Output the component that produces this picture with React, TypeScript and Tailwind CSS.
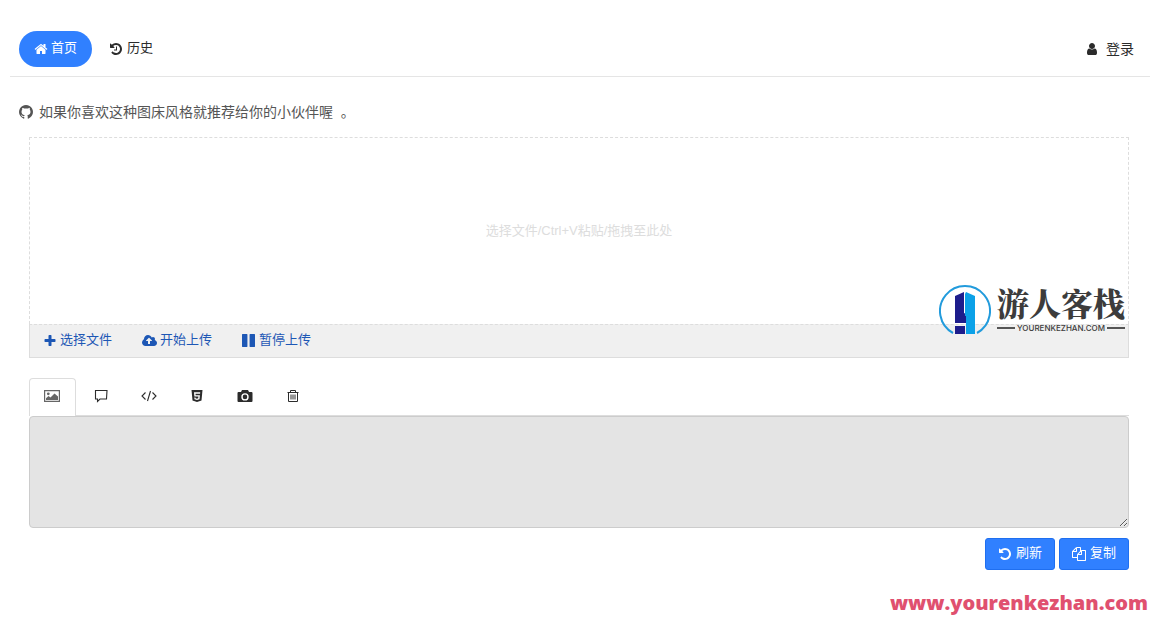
import { useState, type ReactNode } from "react";

const icons = {
    home: "M1472 992v480q0 26-19 45t-45 19h-384v-384h-256v384h-384q-26 0-45-19t-19-45v-480q0-1 .5-3t.5-3l575-474 575 474q1 2 1 6zm223-69l-62 74q-8 9-21 11h-3q-13 0-21-7l-692-577-692 577q-12 8-24 7-13-2-21-11l-62-74q-8-10-7-23.5t11-21.5l719-599q32-26 76-26t76 26l244 204v-195q0-14 9-23t23-9h192q14 0 23 9t9 23v408l219 182q10 8 11 21.5t-7 23.5z",
    history: "M1664 896q0 156-61 298t-164 245-245 164-298 61q-172 0-327-72.5t-264-204.5q-7-10-6.5-22.5t8.5-20.5l137-138q10-9 25-9 16 2 23 12 73 95 179 147t225 52q104 0 198.5-40.5t163.5-109.5 109.5-163.5 40.5-198.5-40.5-198.5-109.5-163.5-163.5-109.5-198.5-40.5q-98 0-188 35.5t-160 101.5l137 138q31 30 14 69-17 40-59 40h-448q-26 0-45-19t-19-45v-448q0-42 40-59 39-17 69 14l130 129q107-101 244.5-156.5t284.5-55.5q156 0 298 61t245 164 164 245 61 298zm-640-288v448q0 14-9 23t-23 9h-320q-14 0-23-9t-9-23v-64q0-14 9-23t23-9h224v-352q0-14 9-23t23-9h64q14 0 23 9t9 23z",
    user: "M1536 1399q0 109-62.5 187t-150.5 78h-854q-88 0-150.5-78t-62.5-187q0-85 8.5-160.5t31.5-152 58.5-131 94-89 134.5-34.5q131 128 313 128t313-128q76 0 134.5 34.5t94 89 58.5 131 31.5 152 8.5 160.5zm-256-887q0 159-112.5 271.5t-271.5 112.5-271.5-112.5-112.5-271.5 112.5-271.5 271.5-112.5 271.5 112.5 112.5 271.5z",
    github: "M896 128q209 0 385.5 103t279.5 279.5 103 385.5q0 251-146.5 451.5t-378.5 277.5q-27 5-40-7t-13-30q0-3 .5-76.5t.5-134.5q0-97-52-142 57-6 102.5-18t94-39 81-66.5 53-105 20.5-150.5q0-119-79-206 37-91-8-204-28-9-81 11t-92 44l-38 24q-93-26-192-26t-192 26q-16-11-42.5-27t-83.5-38.5-85-13.5q-45 113-8 204-79 87-79 206 0 85 20.5 150t52.5 105 80.5 67 94 39 102.5 18q-39 36-49 103-21 10-45 15t-57 5-65.5-21.5-55.5-62.5q-19-32-48.5-52t-49.5-24l-20-3q-21 0-29 4.5t-5 11.5 9 14 13 12l7 5q22 10 43.5 38t31.5 51l10 23q13 38 44 61.5t67 30 69.5 7 55.5-3.5l23-4q0 38 .5 88.5t.5 54.5q0 18-13 30t-40 7q-232-77-378.5-277.5t-146.5-451.5q0-209 103-385.5t279.5-279.5 385.5-103z",
    plus: "M1600 736v192q0 40-28 68t-68 28h-416v416q0 40-28 68t-68 28h-192q-40 0-68-28t-28-68v-416h-416q-40 0-68-28t-28-68v-192q0-40 28-68t68-28h416v-416q0-40 28-68t68-28h192q40 0 68 28t28 68v416h416q40 0 68 28t28 68z",
    cloud: "M1280 864q0-14-9-23l-352-352q-9-9-23-9t-23 9l-351 351q-10 12-10 24 0 14 9 23t23 9h224v352q0 13 9.5 22.5t22.5 9.5h192q13 0 22.5-9.5t9.5-22.5v-352h224q13 0 22.5-9.5t9.5-22.5zm640 288q0 159-112.5 271.5t-271.5 112.5h-1088q-185 0-316.5-131.5t-131.5-316.5q0-130 70-240t188-165q-2-30-2-43 0-212 150-362t362-150q156 0 285.5 87t188.5 231q71-62 166-62 106 0 181 75t75 181q0 76-41 138 130 31 213.5 135.5t83.5 238.5z",
    pause: "M1664 192v1408q0 26-19 45t-45 19h-512q-26 0-45-19t-19-45v-1408q0-26 19-45t45-19h512q26 0 45 19t19 45zm-896 0v1408q0 26-19 45t-45 19h-512q-26 0-45-19t-19-45v-1408q0-26 19-45t45-19h512q26 0 45 19t19 45z",
    undo: "M1664 896q0 156-61 298t-164 245-245 164-298 61q-172 0-327-72.5t-264-204.5q-7-10-6.5-22.5t8.5-20.5l137-138q10-9 25-9 16 2 23 12 73 95 179 147t225 52q104 0 198.5-40.5t163.5-109.5 109.5-163.5 40.5-198.5-40.5-198.5-109.5-163.5-163.5-109.5-198.5-40.5q-98 0-188 35.5t-160 101.5l137 138q31 30 14 69-17 40-59 40h-448q-26 0-45-19t-19-45v-448q0-42 40-59 39-17 69 14l130 129q107-101 244.5-156.5t284.5-55.5q156 0 298 61t245 164 164 245 61 298z",
    copy: "M1696 384q40 0 68 28t28 68v1216q0 40-28 68t-68 28h-960q-40 0-68-28t-28-68v-288h-544q-40 0-68-28t-28-68v-672q0-40 20-88t48-76l408-408q28-28 76-48t88-20h416q40 0 68 28t28 68v328q68-40 128-40h416zm-544 213l-299 299h299v-299zm-640-384l-299 299h299v-299zm196 647l316-316v-416h-384v416q0 40-28 68t-68 28h-416v640h512v-256q0-40 20-88t48-76zm956 804v-1152h-384v416q0 40-28 68t-68 28h-416v640h896z",
};

function Icon({ name, className = "size-[14px]", box = "0 0 1792 1792" }: { name: keyof typeof icons; className?: string; box?: string }) {
    return (
        <svg viewBox={box} fill="currentColor" className={className} aria-hidden="true">
            <path d={icons[name]} />
        </svg>
    );
}

const tabs: { id: string; label: string; icon: ReactNode }[] = [
    {
        id: "image",
        label: "图片链接",
        icon: (
            <svg viewBox="0 0 16 16" className="size-4" fill="currentColor">
                <path fillRule="evenodd" d="M0 2h16v12H0zM1.200 3.200v9.600h13.600V3.200z" />
                <circle cx="4.3" cy="5.800" r="1.4" />
                <path d="M2 12V10.200l2.500-2.200 2 1.500L10.500 5.500 14 8.500V12z" />
            </svg>
        ),
    },
    {
        id: "bbcode",
        label: "BBCode",
        icon: (
            <svg viewBox="0 0 16 16" className="size-4" fill="none" stroke="currentColor" strokeWidth="1.1">
                <path d="M2.500 2.500h11.500l-.5 8.500H7L4.500 13.500V11H2.500z" />
            </svg>
        ),
    },
    {
        id: "html",
        label: "HTML",
        icon: (
            <svg viewBox="0 0 16 16" className="size-4" fill="none" stroke="currentColor" strokeWidth="1.1">
                <path d="M4.500 4.500L1 8l3.500 3.500M11.500 4.500L15 8l-3.500 3.500M9.500 3l-3 10" />
            </svg>
        ),
    },
    {
        id: "html5",
        label: "HTML5",
        icon: (
            <svg viewBox="0 0 16 16" className="size-4" fill="currentColor">
                <path fillRule="evenodd" d="M2.500 2h11l-1 10.500L8 14l-4.500-1.500zM5 4.300l.4 4.300h4l-.2 1.700-1.300.4-1.300-.4-.1-.8H5.300l.2 1.800L8 12l2.500-.7.4-4H6.600l-.1-1.500h4.600l.1-1.500z" />
            </svg>
        ),
    },
    {
        id: "camera",
        label: "缩略图",
        icon: (
            <svg viewBox="0 0 16 16" className="size-4" fill="currentColor">
                <path fillRule="evenodd" d="M5 2h6l1 2h2.500q1 0 1 1v8q0 1-1 1h-13q-1 0-1-1V5q0-1 1-1H4zM8 5.200a3.700 3.700 0 1 0 0 7.400 3.700 3.700 0 0 0 0-7.400zm0 1.400a2.300 2.300 0 1 1 0 4.600 2.300 2.300 0 0 1 0-4.600z" />
            </svg>
        ),
    },
    {
        id: "delete",
        label: "删除链接",
        icon: (
            <svg viewBox="0 0 16 16" className="size-4" fill="none" stroke="currentColor" strokeWidth="1">
                <path d="M2.500 4.500h11M5.500 4.500V2.500h5v2M3.500 4.500v9h9v-9M6 6.500v5M8 6.500v5M10 6.500v5" />
            </svg>
        ),
    },
];

function Brand() {
    return (
        <div className="pointer-events-none absolute right-1 bottom-[22px] flex items-start gap-[6px] text-[#3c3c3c]">
            <svg viewBox="0 0 52 52" className="size-[52px]" aria-hidden="true">
                <path d="M14 49A25 25 0 1 1 38 49" fill="none" stroke="#229bdc" strokeWidth="2" />
                <path d="M16 12l9-4v21l2 1v9H16z" fill="#1d1d8c" />
                <path d="M27 8l9 4v38h-9V32h-1V10z" fill="#0ba1e8" />
                <path d="M16 42h10v8H16z" fill="#1d1d8c" />
            </svg>
            <div className="flex flex-col">
                <div className="font-['Noto_Serif_CJK_SC','Noto_Sans_CJK_SC',serif] text-[32px] leading-9 font-black">游人客栈</div>
                <div className="mt-[3px] flex items-center gap-[2px] font-['Inter',sans-serif] text-[8px] leading-[10px] font-medium">
                    <span className="h-[2px] flex-1 bg-[#555]" />
                    YOURENKEZHAN.COM
                    <span className="h-[2px] flex-1 bg-[#555]" />
                </div>
            </div>
        </div>
    );
}

export default function App() {
    const [tab, setTab] = useState("image");

    return (
        <div className="px-[10px] pt-5 font-['Liberation_Sans','Noto_Sans_CJK_SC',sans-serif] text-sm text-[#2b2b2b]">
            <header className="-mr-[6px] flex items-center justify-between border-b border-[#e5e5e5] pt-[10px] pr-4 pb-[9px] pl-[9px]">
                <nav className="flex items-center gap-[17px]">
                    <a href="#" className="mt-px flex h-9 items-center gap-[3px] rounded-full bg-[#3080ff] px-[15px] pb-px text-[13px] text-white">
                        <Icon name="home" />
                        首页
                    </a>
                    <a href="#history" className="flex items-center gap-1 text-[13px]">
                        <Icon name="history" />
                        历史
                    </a>
                </nav>
                <a href="#login" className="flex items-center gap-[7px]">
                    <Icon name="user" />
                    登录
                </a>
            </header>

            <main className="px-[9px]">
                <p className="mt-[25px] flex items-center gap-[6px] leading-5 text-[#555]">
                    <Icon name="github" box="128 128 1536 1536" />
                    <span>如果你喜欢这种图床风格就推荐给你的小伙伴喔&nbsp; 。</span>
                </p>

                <div className="mt-[15px] pr-[6px] pl-[10px]">
                    <section className="relative">
                        <div className="flex h-[187px] items-center justify-center border border-b-0 border-dashed border-[#ddd] text-[13px] text-[#ddd]">
                            选择文件/Ctrl+V粘贴/拖拽至此处
                        </div>
                        <div className="flex h-[34px] items-center gap-[30px] border border-[#ddd] bg-[#f0f0f0] px-[14px] pb-px text-[13px] text-[#1d57b5] [border-top-style:dashed]">
                            <button className="flex items-center gap-1">
                                <Icon name="plus" box="128 128 1536 1536" className="size-3" />
                                选择文件
                            </button>
                            <button className="flex items-center gap-[3px]">
                                <Icon name="cloud" box="0 0 1920 1792" className="h-[14px] w-[15px]" />
                                开始上传
                            </button>
                            <button className="flex items-center gap-1">
                                <Icon name="pause" box="128 128 1536 1536" className="size-[13px]" />
                                暂停上传
                            </button>
                        </div>
                        <Brand />
                    </section>

                    <div role="tablist" className="mt-5 flex border-b border-[#ddd]">
                        {tabs.map((t) => (
                            <button
                                key={t.id}
                                role="tab"
                                aria-label={t.label}
                                aria-selected={tab === t.id}
                                onClick={() => setTab(t.id)}
                                className={
                                    tab === t.id
                                        ? "mr-px -mb-px flex h-[38px] w-[47px] items-center justify-center rounded-t border border-b-0 border-[#ddd] bg-white pr-px pb-[3px] text-[#666]"
                                        : "flex h-9 w-12 items-center justify-center"
                                }
                            >
                                {t.icon}
                            </button>
                        ))}
                    </div>
                    <textarea readOnly aria-label="链接" className="block h-28 w-full resize-y rounded border border-[#ccc] bg-[#e4e4e4] p-2" />

                    <div className="mt-[10px] flex justify-end gap-1 text-[13px] text-white">
                        <button className="flex h-8 items-center gap-1 rounded-[3px] border border-[#1f6ff0] bg-[#3080ff] px-3 pb-px">
                            <Icon name="undo" />
                            刷新
                        </button>
                        <button className="flex h-8 items-center gap-1 rounded-[3px] border border-[#1f6ff0] bg-[#3080ff] px-3 pb-px">
                            <Icon name="copy" />
                            复制
                        </button>
                    </div>
                </div>
            </main>

            <footer className="mt-5 -mr-1 text-right font-['Open_Sans','Noto_Sans',sans-serif] text-xl leading-[26px] font-extrabold text-[#e0506f]">
                www.yourenkezhan.com
            </footer>
        </div>
    );
}
